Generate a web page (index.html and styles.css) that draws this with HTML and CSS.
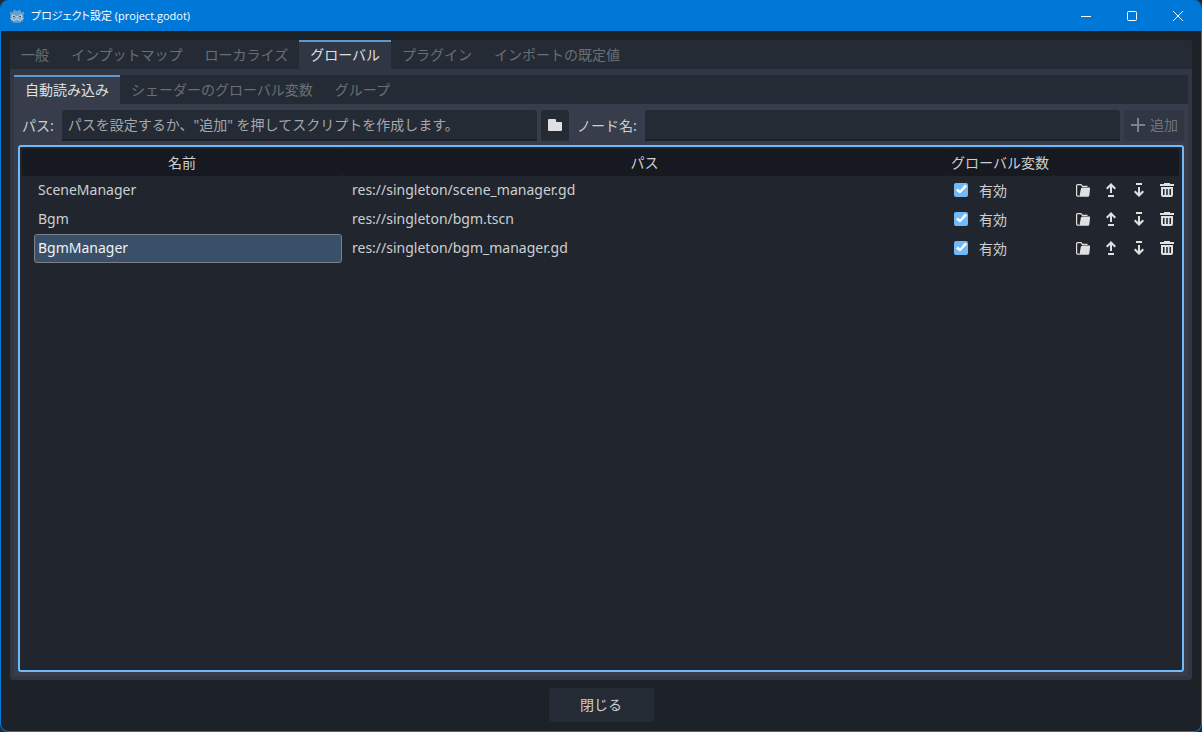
FILE: index.html
```html
<!DOCTYPE html>
<html lang="ja">
<head>
    <meta charset="UTF-8">
    <meta name="viewport" content="width=device-width, initial-scale=1.0">
    <title>プロジェクト設定 (project.godot)</title>
    <link rel="stylesheet" href="styles.css">
</head>
<body>
    <!-- shared icons -->
    <svg class="sprite" aria-hidden="true">
        <symbol id="icon-folder" viewBox="0 0 16 16">
            <path d="M2 2a1 1 0 0 0-1 1v10a1 1 0 0 0 1 1h12a1 1 0 0 0 1-1V6a1 1 0 0 0-1-1h-4a1 1 0 0 1-1-1V3a1 1 0 0 0-1-1z" />
        </symbol>
        <symbol id="icon-load" viewBox="0 0 16 16">
            <path fill="none" stroke="#e0e0e0" stroke-width="1.2" d="M4 14.200H2.600a1 1 0 0 1-1-1V3.600a1 1 0 0 1 1-1H6L7.500 4.400H12.500" />
            <path d="M7.500 5.500H14.300a.8.8 0 0 1 .8.9L14.300 13.500a1.500 1.500 0 0 1-1.500 1.300H3.500a2 2 0 0 0 1.200-1.500L5.800 7a1.800 1.800 0 0 1 1.700-1.500z" />
        </symbol>
        <symbol id="icon-up" viewBox="0 0 16 16">
            <path d="M8 1 3 6l1.400 1.500L7 5v6h2V5l2.600 2.500L13 6zM5 13h6v2H5z" />
        </symbol>
        <symbol id="icon-down" viewBox="0 0 16 16">
            <path d="M8 15 3 10l1.400-1.500L7 11V5h2v6l2.600-2.500L13 10zM5 1h6v2H5z" />
        </symbol>
        <symbol id="icon-remove" viewBox="0 0 16 16">
            <path fill-rule="evenodd" d="M5 1v1H1v2h14V2h-4V1zM2 5v8a2 2 0 0 0 2 2h8a2 2 0 0 0 2-2V5zm2 2h1.500v6H4zm3.250 0h1.500v6h-1.500zM10.500 7H12v6h-1.500z" />
        </symbol>
        <symbol id="icon-add" viewBox="0 0 16 16">
            <path d="M7 1v6H1v2h6v6h2V9h6V7H9V1z" />
        </symbol>
    </svg>

    <div class="window">
        <header class="titlebar">
            <svg class="app-icon" viewBox="0 0 16 16">
                <path fill="#6a9fc9" d="M6 1.500 7 3h2l1-1.500 1.500.8.3 1.500 1 .7 1.500-.8L15.300 5 14.500 7v4c0 3-3.500 3.800-6.500 3.800S1.500 14 1.500 11V7L.7 5l1-1.300 1.500.8 1-.7.3-1.500z" />
                <path fill="none" stroke="#d5e3ef" stroke-width=".8" d="M1.500 10.500h2l.5 1.500h2.500v-1h3v1H12l.5-1.500h2" />
                <circle cx="4.600" cy="8.300" r="1.800" fill="#e8eef3" />
                <circle cx="11.400" cy="8.300" r="1.800" fill="#e8eef3" />
                <circle cx="4.800" cy="8.400" r="1" fill="#414042" />
                <circle cx="11.200" cy="8.400" r="1" fill="#414042" />
                <path fill="#e8eef3" d="M7.500 8h1v2h-1z" />
            </svg>
            <h1>プロジェクト設定 (project.godot)</h1>
            <div class="window-buttons">
                <button type="button" aria-label="最小化"><svg viewBox="0 0 10 10"><path d="M0 5.500h10" /></svg></button>
                <button type="button" aria-label="最大化"><svg viewBox="0 0 10 10"><rect x=".5" y=".5" width="9" height="9" rx="1" /></svg></button>
                <button type="button" aria-label="ウィンドウを閉じる"><svg viewBox="0 0 10 10"><path d="M0 0l10 10M10 0 0 10" /></svg></button>
            </div>
        </header>

        <main class="settings">
            <nav class="tabs">
                <button type="button" class="tab">一般</button>
                <button type="button" class="tab">インプットマップ</button>
                <button type="button" class="tab">ローカライズ</button>
                <button type="button" class="tab active">グローバル</button>
                <button type="button" class="tab">プラグイン</button>
                <button type="button" class="tab">インポートの既定値</button>
            </nav>

            <section class="globals">
                <nav class="tabs">
                    <button type="button" class="tab active">自動読み込み</button>
                    <button type="button" class="tab">シェーダーのグローバル変数</button>
                    <button type="button" class="tab">グループ</button>
                </nav>

                <div class="autoload">
                    <form class="add-form">
                        <label for="path">パス:</label>
                        <input type="text" id="path" placeholder="パスを設定するか、&quot;追加&quot; を押してスクリプトを作成します。">
                        <button type="button" class="browse" aria-label="参照"><svg class="icon"><use href="#icon-folder" /></svg></button>
                        <label for="nodeName">ノード名:</label>
                        <input type="text" id="nodeName">
                        <button type="submit" class="add" disabled><svg class="icon"><use href="#icon-add" /></svg>追加</button>
                    </form>

                    <div class="tree">
                        <table>
                            <colgroup>
                                <col class="col-name">
                                <col>
                                <col class="col-global">
                                <col class="col-actions">
                            </colgroup>
                            <thead>
                                <tr>
                                    <th>名前</th>
                                    <th>パス</th>
                                    <th>グローバル変数</th>
                                    <th></th>
                                </tr>
                            </thead>
                            <tbody>
                                <tr>
                                    <td class="name"><div>SceneManager</div></td>
                                    <td class="path">res://singleton/scene_manager.gd</td>
                                    <td><label class="enable"><input type="checkbox" checked>有効</label></td>
                                    <td>
                                        <div class="actions">
                                            <button type="button" aria-label="開く"><svg class="icon"><use href="#icon-load" /></svg></button>
                                            <button type="button" aria-label="上へ"><svg class="icon"><use href="#icon-up" /></svg></button>
                                            <button type="button" aria-label="下へ"><svg class="icon"><use href="#icon-down" /></svg></button>
                                            <button type="button" aria-label="削除"><svg class="icon"><use href="#icon-remove" /></svg></button>
                                        </div>
                                    </td>
                                </tr>
                                <tr>
                                    <td class="name"><div>Bgm</div></td>
                                    <td class="path">res://singleton/bgm.tscn</td>
                                    <td><label class="enable"><input type="checkbox" checked>有効</label></td>
                                    <td>
                                        <div class="actions">
                                            <button type="button" aria-label="開く"><svg class="icon"><use href="#icon-load" /></svg></button>
                                            <button type="button" aria-label="上へ"><svg class="icon"><use href="#icon-up" /></svg></button>
                                            <button type="button" aria-label="下へ"><svg class="icon"><use href="#icon-down" /></svg></button>
                                            <button type="button" aria-label="削除"><svg class="icon"><use href="#icon-remove" /></svg></button>
                                        </div>
                                    </td>
                                </tr>
                                <tr>
                                    <td class="name selected"><div>BgmManager</div></td>
                                    <td class="path">res://singleton/bgm_manager.gd</td>
                                    <td><label class="enable"><input type="checkbox" checked>有効</label></td>
                                    <td>
                                        <div class="actions">
                                            <button type="button" aria-label="開く"><svg class="icon"><use href="#icon-load" /></svg></button>
                                            <button type="button" aria-label="上へ"><svg class="icon"><use href="#icon-up" /></svg></button>
                                            <button type="button" aria-label="下へ"><svg class="icon"><use href="#icon-down" /></svg></button>
                                            <button type="button" aria-label="削除"><svg class="icon"><use href="#icon-remove" /></svg></button>
                                        </div>
                                    </td>
                                </tr>
                            </tbody>
                        </table>
                    </div>
                </div>
            </section>
        </main>

        <footer class="footer">
            <button type="button" class="close">閉じる</button>
        </footer>
    </div>
</body>
</html>
```
FILE: styles.css
```css
* {
    margin: 0;
    padding: 0;
    box-sizing: border-box;
}

html {
    background: #24282e;
}

body {
    display: flex;
    min-height: 100vh;
    font-family: "Noto Sans", "Noto Sans CJK JP", sans-serif;
    font-size: 14px;
    line-height: 20px;
    color: #cdcfd2;
}

button,
input {
    font: inherit;
    color: inherit;
    border: none;
    background: none;
}

.sprite {
    position: absolute;
    width: 0;
    height: 0;
}

.icon {
    display: block;
    flex: none;
    width: 16px;
    height: 16px;
    fill: #e0e0e0;
}

.window {
    flex: 1;
    min-width: 0;
    display: flex;
    flex-direction: column;
    border: 1px solid #0078d7;
    border-top: none;
    border-radius: 8px;
    background: #1d2229;
    overflow: hidden;
}

/* title bar */
.titlebar {
    display: flex;
    align-items: center;
    height: 31px;
    padding-left: 8px;
    background: #0078d7;
    color: #fff;
}

.app-icon {
    width: 16px;
    height: 16px;
    margin-right: 6px;
}

.titlebar h1 {
    flex: 1;
    font-family: "Open Sans", "Noto Sans CJK JP", sans-serif;
    font-size: 11px;
    font-weight: 400;
    font-feature-settings: "palt";
}

.window-buttons {
    display: flex;
}

.window-buttons button {
    display: flex;
    align-items: center;
    justify-content: center;
    width: 46px;
    height: 31px;
}

.window-buttons svg {
    width: 10px;
    height: 10px;
    fill: none;
    stroke: #fff;
    overflow: visible;
}

/* tabs */
.settings {
    flex: 1;
    display: flex;
    flex-direction: column;
    margin: 9px 9px 0;
    border-radius: 3px;
    background: #303643;
    overflow: hidden;
}

.tabs {
    display: flex;
    border-radius: 3px 3px 0 0;
    background: #252b34;
}

.tab {
    height: 29px;
    padding: 0 11px 2px;
    border-top: 2px solid transparent;
    color: #6a6f76;
    white-space: nowrap;
}

.tab.active {
    border-top-color: #5c98ce;
    background: #303643;
    color: #dfe0e2;
}

.globals {
    flex: 1;
    display: flex;
    flex-direction: column;
    padding: 6px 4px 4px;
}

.globals .tab.active {
    background: #373d4b;
}

.autoload {
    flex: 1;
    display: flex;
    flex-direction: column;
    gap: 4px;
    padding: 6px 4px 4px;
    background: #373d4b;
}

/* add form */
.add-form {
    display: flex;
    align-items: stretch;
    gap: 4px;
    height: 31px;
}

.add-form label {
    padding: 0 4px;
    line-height: 31px;
    white-space: nowrap;
}

.add-form input {
    flex: 1;
    min-width: 0;
    padding: 1px 6px 0;
    border-bottom: 2px solid #1d2229;
    border-radius: 3px 3px 0 0;
    background: #252b34;
    outline: none;
}

.add-form input::placeholder {
    color: #a4a7ac;
    opacity: 1;
}

.add-form button {
    display: flex;
    align-items: center;
    justify-content: center;
    padding-bottom: 1px;
    border-radius: 3px;
}

.browse {
    width: 28px;
    background: #252b34;
}

.add {
    gap: 4px;
    width: 60px;
    background: #303643;
    color: #70747d;
}

.add .icon {
    fill: #7d8189;
}

/* autoload list */
.tree {
    flex: 1;
    padding: 2px 3px 2px 2px;
    border: 2px solid #70bafa;
    border-radius: 3px;
    background: #21262e;
}

table {
    width: 100%;
    table-layout: fixed;
    border-collapse: separate;
    border-spacing: 0;
}

.col-name {
    width: 320px;
}

.col-global {
    width: 106px;
}

.col-actions {
    width: 126px;
}

th {
    height: 27px;
    border-radius: 3px;
    background: #16191f;
    font-weight: 400;
    white-space: nowrap;
}

td {
    height: 29px;
}

.name {
    padding-left: 12px;
}

.name div {
    padding: 0 3px 2px;
    border: 1px solid transparent;
    border-radius: 3px;
    line-height: 25px;
}

.selected div {
    border-color: #7a8087;
    background: #395068;
    color: #f2f2f2;
}

.path {
    padding: 0 0 2px 10px;
}

.enable {
    display: flex;
    align-items: center;
    gap: 11px;
    padding-left: 7px;
}

.enable input {
    appearance: none;
    width: 14px;
    height: 14px;
    margin-bottom: 2px;
    border-radius: 2px;
    background: #252b34;
}

.enable input:checked {
    background: #70bafa;
}

.enable input:checked::before {
    content: "";
    display: block;
    width: 14px;
    height: 14px;
    background: #fff;
    clip-path: polygon(11px 2px, 13px 4px, 6px 11px, 2px 8px, 4px 6px, 6px 8px);
}

.actions {
    display: flex;
    justify-content: flex-end;
    gap: 4px;
    padding-bottom: 2px;
}

.actions button {
    display: flex;
    justify-content: center;
    width: 24px;
}

/* footer */
.footer {
    display: flex;
    justify-content: center;
    padding: 8px 0 9px;
}

.close {
    width: 105px;
    height: 34px;
    border-radius: 3px;
    background: #252b34;
}
```
